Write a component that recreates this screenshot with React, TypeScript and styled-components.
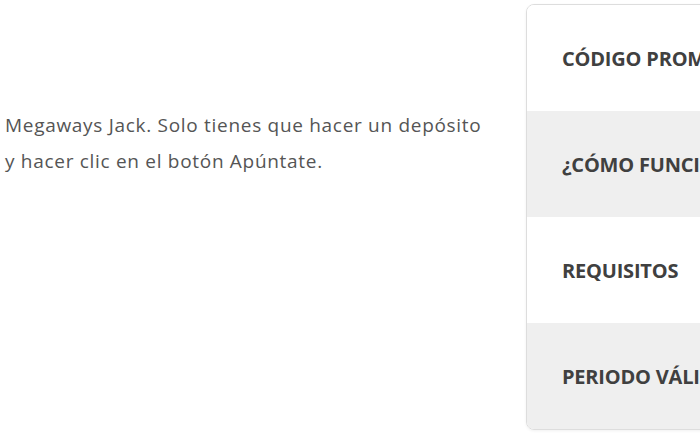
import React from "react";
import styled, { createGlobalStyle } from "styled-components";

const GlobalStyle = createGlobalStyle`
  html, body {
    margin: 0;
    padding: 0;
    background: #ffffff;
    overflow: hidden;
  }
  body {
    font-family: "Open Sans", "Liberation Sans", sans-serif;
  }
`;

const Page = styled.div`
  display: grid;
  grid-template-columns: 526px 320px;
  width: 700px;
  height: 441px;
  overflow: hidden;
`;

const Content = styled.div`
  padding: 107px 0 0 5px;
`;

const Paragraph = styled.p`
  margin: 0;
  font-size: 19px;
  letter-spacing: 0.7px;
  line-height: 36px;
  color: #555555;
  width: 515px;
`;

const Card = styled.nav`
  margin-top: 4px;
  align-self: start;
  border: 1px solid #dddddd;
  border-radius: 8px;
  overflow: hidden;
  box-shadow: 0 1px 3px rgba(0, 0, 0, 0.06);
`;

const Row = styled.div<{ shaded?: boolean }>`
  display: flex;
  align-items: center;
  height: 106px;
  padding-left: 35px;
  background: ${(props) => (props.shaded ? "#efefef" : "#ffffff")};
  font-size: 20px;
  font-weight: 700;
  letter-spacing: -0.2px;
  color: #404040;
  white-space: nowrap;
`;

const items = [
  "CÓDIGO PROMOCIONAL",
  "¿CÓMO FUNCIONA?",
  "REQUISITOS",
  "PERIODO VÁLIDO",
];

export default function App() {
  return (
    <>
      <GlobalStyle />
      <Page>
        <Content>
          <Paragraph>
            Megaways Jack. Solo tienes que hacer un depósito
            <br />y hacer clic en el botón Apúntate.
          </Paragraph>
        </Content>
        <Card>
          {items.map((label, i) => (
            <Row key={label} shaded={i % 2 === 1}>
              {label}
            </Row>
          ))}
        </Card>
      </Page>
    </>
  );
}
